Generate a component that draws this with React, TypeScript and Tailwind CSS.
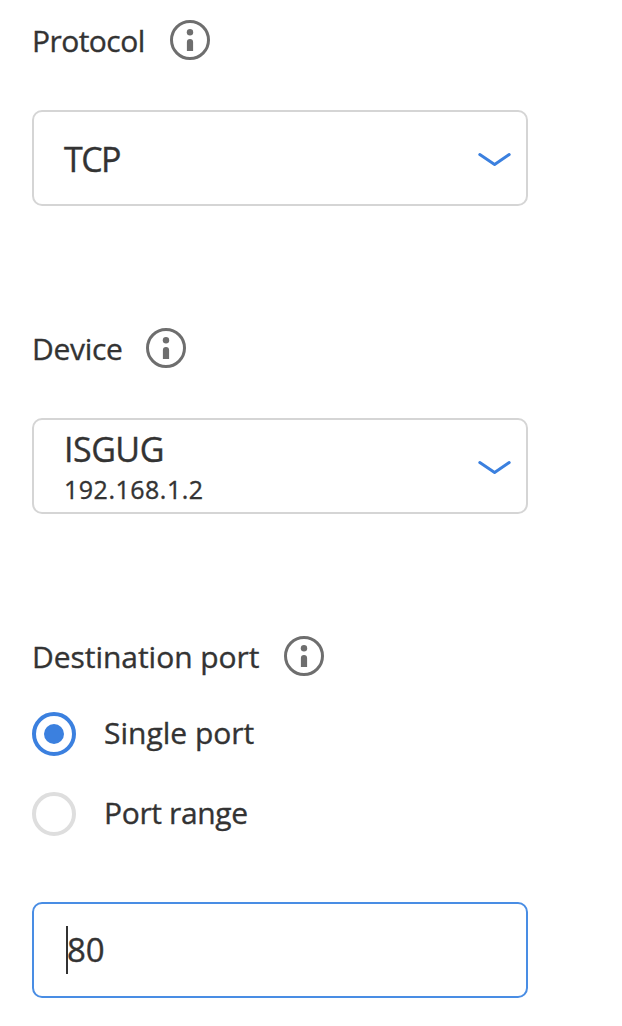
import type { ReactNode } from "react";

function InfoIcon() {
  return (
    <svg width="40" height="40" viewBox="0 0 40 40" className="shrink-0" aria-hidden="true">
      <circle cx="20" cy="20" r="18.5" fill="none" stroke="#6e6e6e" strokeWidth="3" />
      <circle cx="20" cy="12.2" r="3.2" fill="#6e6e6e" />
      <path d="M16.9 31v-9a3.1 3.1 0 0 1 6.2 0v9z" fill="#6e6e6e" />
    </svg>
  );
}

function Chevron() {
  return (
    <svg width="34" height="20" viewBox="0 0 34 20" className="shrink-0" aria-hidden="true">
      <path d="M2.8 6.6 17.6 16.4 32.2 6.6" fill="none" stroke="#3b80df" strokeWidth="3" strokeLinecap="round" strokeLinejoin="round" />
    </svg>
  );
}

function Label({ children }: { children: ReactNode }) {
  return <div className="flex h-10 items-center justify-between text-[30px] leading-10">{children}</div>;
}

function Select({ children }: { children: ReactNode }) {
  return (
    <button type="button" className="flex h-24 w-[496px] items-center justify-between rounded-[10px] border-2 border-[#d5d5d5] pr-[15px] pl-[30px] text-left">
      {children}
      <Chevron />
    </button>
  );
}

export default function App() {
  return (
    <main className="flex h-[1026px] w-[622px] flex-col items-start bg-white pt-5 pl-8 font-['Open_Sans',sans-serif] whitespace-nowrap text-[#333] [-webkit-text-stroke:0.35px_#333]">
      <div className="w-[178px]">
        <Label><span className="pt-0.5 tracking-[-0.55px]">Protocol</span><InfoIcon /></Label>
      </div>
      <div className="mt-[50px]">
        <Select><span className="pt-0.5 text-[34px] leading-10 tracking-[-1.6px]">TCP</span></Select>
      </div>

      <div className="mt-[122px] w-[154px]">
        <Label><span className="pt-0.5 tracking-[-0.3px]">Device</span><InfoIcon /></Label>
      </div>
      <div className="mt-[50px]">
        <Select>
          <span className="flex flex-col pt-[3px]">
            <span className="text-[34px] leading-[44px] tracking-[-0.5px]">ISGUG</span>
            <span className="text-[25px] leading-[37px] tracking-[0.5px]">192.168.1.2</span>
          </span>
        </Select>
      </div>

      <div className="mt-[122px] w-[292px]">
        <Label><span className="pt-0.5 tracking-[-0.04px]">Destination port</span><InfoIcon /></Label>
      </div>
      <div className="mt-9 flex h-11 items-center gap-7 text-[30px]">
        <span className="flex size-11 items-center justify-center rounded-full border-4 border-[#3b80df]">
          <span className="size-5 rounded-full bg-[#3b80df]" />
        </span>
        <span className="pb-0.5 leading-10">Single port</span>
      </div>
      <div className="mt-9 flex h-11 items-center gap-7 text-[30px]">
        <span className="size-11 rounded-full border-4 border-[#dedede]" />
        <span className="pb-0.5 leading-10 tracking-[-0.35px]">Port range</span>
      </div>
      <div className="mt-[66px] flex h-24 w-[496px] items-center rounded-[10px] border-2 border-[#498de4] pl-8">
        <span className="h-12 w-0.5 bg-[#333]" />
        <span className="-ml-px text-[33px] leading-10">80</span>
      </div>
    </main>
  );
}
